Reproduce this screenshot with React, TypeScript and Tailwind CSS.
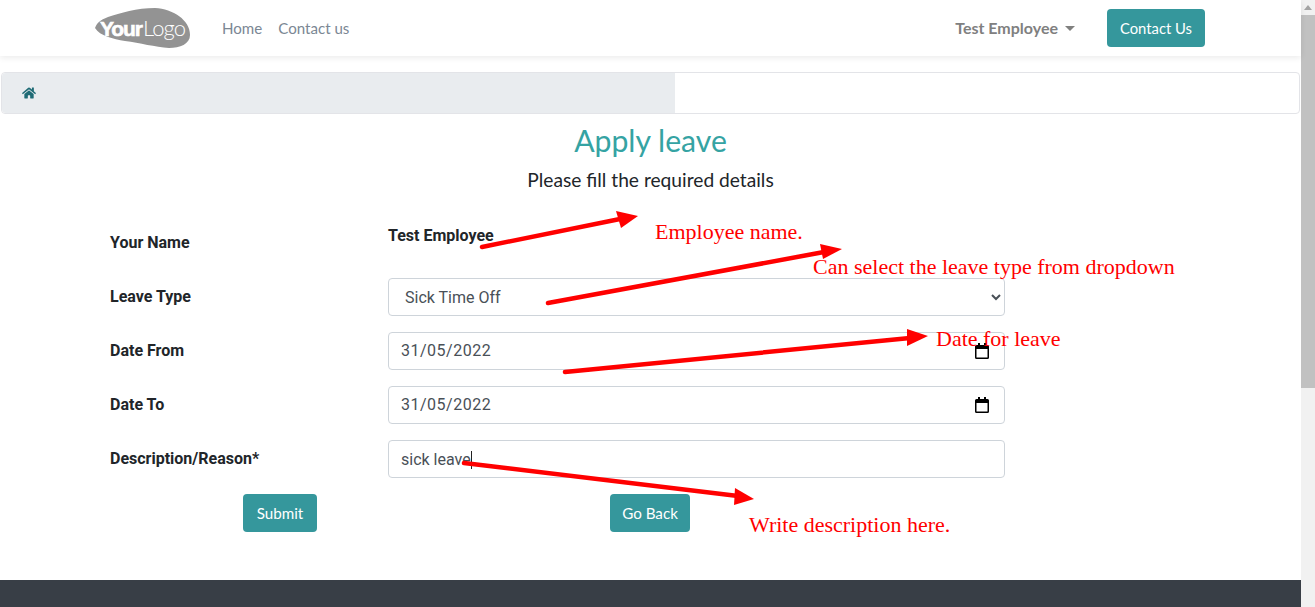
import { FaHome } from 'react-icons/fa';

const SOURCE = "font-['Lato',sans-serif]";

const annotations = [
  { text: 'Employee name.', className: 'left-[655px] top-[219px]' },
  { text: 'Can select the leave type from dropdown', className: 'left-[813px] top-[254px]' },
  { text: 'Date for leave', className: 'left-[936px] top-[326px]' },
  { text: 'Write description here.', className: 'left-[749px] top-[512px]' },
];

function Logo() {
  return (
    <svg width="95" height="40" viewBox="0 0 95 40" className="block">
      <path
        d="M0 20 C2 15 5 12 13 9 C25 5 42 0 60 0 C78 1 95 12 95 27 C95 36 85 40 74 40 C60 39 45 35 30 33 C18 31 5 28 0 20 Z"
        fill="#939393"
      />
      <text x="5" y="28" fill="#fff" stroke="#fff" strokeWidth="0.6" fontFamily="'Liberation Sans',sans-serif" fontWeight="700" fontSize="21" letterSpacing="-1.1">
        Your
      </text>
      <text x="48" y="28" fill="#fff" fontFamily="'Lato',sans-serif" fontWeight="300" fontSize="22" letterSpacing="-0.9">
        Logo
      </text>
    </svg>
  );
}

function CalendarIcon() {
  return (
    <svg width="14" height="16" viewBox="0 0 14 16" className="block">
      <path d="M3 0h2v2H9V0h2v2h1.5A1.5 1.5 0 0 1 14 3.5v11a1.5 1.5 0 0 1-1.500 1.500h-11A1.500 1.500 0 0 1 0 14.500v-11A1.500 1.500 0 0 1 1.500 2H3z M1.500 6v8.500h11V6z" fill="#000" fillRule="evenodd" />
    </svg>
  );
}

function FormRow({ label, children }: { label: string; children: React.ReactNode }) {
  return (
    <div className="flex h-[38px] items-center">
      <label className="w-[278px] text-base font-bold text-[#212529]">{label}</label>
      <div className="w-[617px]">{children}</div>
    </div>
  );
}

function DateField({ value }: { value: string }) {
  return (
    <div className="flex h-[38px] items-center justify-between rounded border border-[#ced4da] bg-white pl-3 pr-[15px] text-base text-[#495057]">
      <span className="tracking-[0.5px]">{value}</span>
      <CalendarIcon />
    </div>
  );
}

function Scrollbar() {
  return (
    <div className="flex h-screen w-[14px] shrink-0 flex-col bg-[#f1f1f1]">
      <div className="flex h-[15px] items-center justify-center">
        <div className="h-0 w-0 border-x-[4px] border-b-[5px] border-x-transparent border-b-[#a3a3a3]" />
      </div>
      <div className="h-[373px] bg-[#c1c1c1]" />
    </div>
  );
}

export default function App() {
  return (
    <div className="flex h-screen overflow-hidden bg-white font-['Roboto',sans-serif]">
      <div className="relative flex min-w-0 flex-1 flex-col">
        {/* Navbar */}
        <header className={`flex h-[56px] shrink-0 items-center bg-white pl-[95px] pr-[96px] shadow-[0_2px_6px_rgba(0,0,0,0.08)] ${SOURCE}`}>
          <Logo />
          <nav className="ml-[32px] flex gap-4 text-[15.1px] text-[#7b8794]">
            <a>Home</a>
            <a>Contact us</a>
          </nav>
          <div className="ml-auto flex items-center gap-[6px] text-base font-bold text-[#80807f]">
            <span>Test Employee</span>
            <span className="ml-[1px] h-0 w-0 border-x-[5px] border-t-[5px] border-x-transparent border-t-[#80807f]" />
          </div>
          <button className="ml-[32px] h-[38px] w-[98px] rounded bg-[#35979c] text-[14.8px] text-white">Contact Us</button>
        </header>

        {/* Breadcrumb */}
        <div className="mx-px mt-4 h-[42px] shrink-0 rounded border border-[#e3e4e8] bg-white">
          <div className="flex h-full w-[673px] items-center rounded-l bg-[#e9ecef] pl-5">
            <FaHome className="text-[14px] text-[#1f6b75]" />
          </div>
        </div>

        {/* Heading */}
        <h1 className={`mt-[5px] h-[42px] text-center text-[30.2px] leading-[42px] text-[#35a3a3] ${SOURCE}`}>Apply leave</h1>
        <p className={`mt-[7px] h-[24px] text-center text-[19.2px] leading-[24px] text-[#212529] ${SOURCE}`}>
          Please fill the required details
        </p>

        {/* Form */}
        <form className="mt-[32px] flex flex-col gap-4 pl-[110px]">
          <div className="flex h-[38px] items-center">
            <label className="-mt-[1px] w-[278px] text-base font-bold text-[#212529]">Your Name</label>
            <span className="-mt-[14px] text-base font-bold text-[#212529]">Test Employee</span>
          </div>
          <FormRow label="Leave Type">
            <select className="h-[38px] w-full rounded border border-[#ced4da] bg-white pl-3 pr-2 text-base text-[#495057]" defaultValue="Sick Time Off">
              <option>Sick Time Off</option>
            </select>
          </FormRow>
          <FormRow label="Date From">
            <DateField value="31/05/2022" />
          </FormRow>
          <FormRow label="Date To">
            <DateField value="31/05/2022" />
          </FormRow>
          <FormRow label="Description/Reason*">
            <div className="flex h-[38px] items-center rounded border border-[#ced4da] bg-white pl-3 pt-[1px] text-base text-[#495057]">
              <span>sick leave</span>
              <span className="h-[18px] w-px bg-[#222]" />
            </div>
          </FormRow>
        </form>

        {/* Buttons */}
        <div className={`mt-4 flex pl-[243px] text-[15.2px] text-white ${SOURCE}`}>
          <button className="h-[38px] w-[74px] rounded bg-[#35979c]">Submit</button>
          <button className="ml-[293px] h-[38px] w-[80px] rounded bg-[#35979c]">Go Back</button>
        </div>

        {/* Footer */}
        <footer className="mt-[48px] flex-1 bg-[#383e46]" />

        {/* Annotations drawn over the page */}
        <svg className="pointer-events-none absolute inset-0 h-full w-full">
          <g stroke="#ff0000" strokeWidth="4.5" strokeLinecap="round">
            <line x1="482" y1="247" x2="620" y2="219" />
            <line x1="548" y1="303" x2="824" y2="252" />
            <line x1="565" y1="372" x2="910" y2="338" />
            <line x1="464" y1="463" x2="738" y2="496" />
          </g>
          <g fill="#ff0000">
            <polygon points="638,216 616,211 621,228" />
            <polygon points="842,249 820,244 823,259" />
            <polygon points="928,336 907,329 907,346" />
            <polygon points="754,499 735,488 734,505" />
          </g>
        </svg>
        {annotations.map((a) => (
          <div
            key={a.text}
            className={`absolute whitespace-nowrap font-['Liberation_Serif',serif] text-[22px] leading-[26px] text-[#ff0000] ${a.className}`}
          >
            {a.text}
          </div>
        ))}
      </div>
      <Scrollbar />
    </div>
  );
}
